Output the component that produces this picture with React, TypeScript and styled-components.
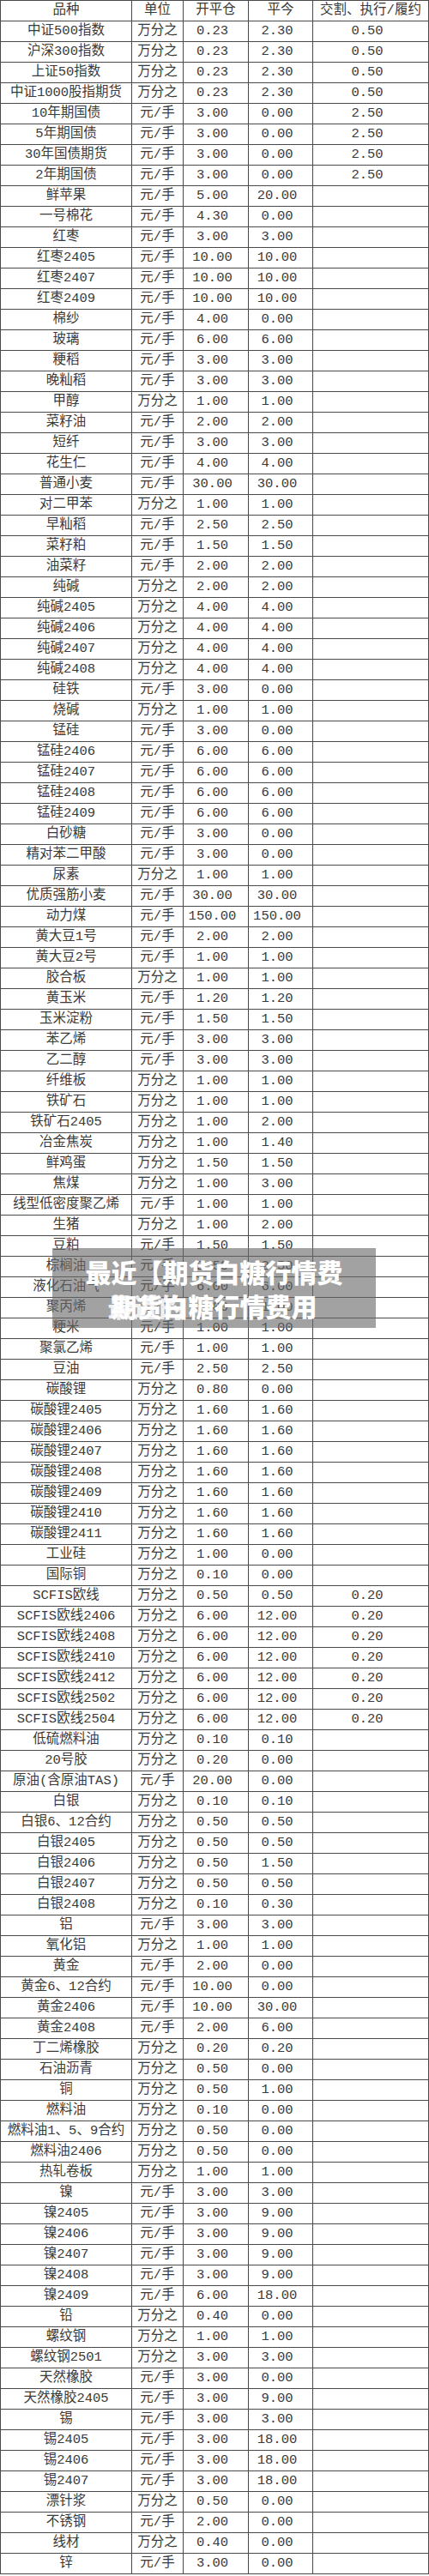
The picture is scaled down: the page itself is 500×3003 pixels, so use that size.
import styled, { createGlobalStyle } from "styled-components";

const GlobalStyle = createGlobalStyle`
  html, body {
    margin: 0;
    padding: 0;
    background: #fff;
  }
`;

type Fee = [string, string, string, string, string?];

const W = "万分之";
const Y = "元/手";

const fees: Fee[] = [
  ["中证500指数", W, "0.23", "2.30", "0.50"],
  ["沪深300指数", W, "0.23", "2.30", "0.50"],
  ["上证50指数", W, "0.23", "2.30", "0.50"],
  ["中证1000股指期货", W, "0.23", "2.30", "0.50"],
  ["10年期国债", Y, "3.00", "0.00", "2.50"],
  ["5年期国债", Y, "3.00", "0.00", "2.50"],
  ["30年国债期货", Y, "3.00", "0.00", "2.50"],
  ["2年期国债", Y, "3.00", "0.00", "2.50"],
  ["鲜苹果", Y, "5.00", "20.00"],
  ["一号棉花", Y, "4.30", "0.00"],
  ["红枣", Y, "3.00", "3.00"],
  ["红枣2405", Y, "10.00", "10.00"],
  ["红枣2407", Y, "10.00", "10.00"],
  ["红枣2409", Y, "10.00", "10.00"],
  ["棉纱", Y, "4.00", "0.00"],
  ["玻璃", Y, "6.00", "6.00"],
  ["粳稻", Y, "3.00", "3.00"],
  ["晚籼稻", Y, "3.00", "3.00"],
  ["甲醇", W, "1.00", "1.00"],
  ["菜籽油", Y, "2.00", "2.00"],
  ["短纤", Y, "3.00", "3.00"],
  ["花生仁", Y, "4.00", "4.00"],
  ["普通小麦", Y, "30.00", "30.00"],
  ["对二甲苯", W, "1.00", "1.00"],
  ["早籼稻", Y, "2.50", "2.50"],
  ["菜籽粕", Y, "1.50", "1.50"],
  ["油菜籽", Y, "2.00", "2.00"],
  ["纯碱", W, "2.00", "2.00"],
  ["纯碱2405", W, "4.00", "4.00"],
  ["纯碱2406", W, "4.00", "4.00"],
  ["纯碱2407", W, "4.00", "4.00"],
  ["纯碱2408", W, "4.00", "4.00"],
  ["硅铁", Y, "3.00", "0.00"],
  ["烧碱", W, "1.00", "1.00"],
  ["锰硅", Y, "3.00", "0.00"],
  ["锰硅2406", Y, "6.00", "6.00"],
  ["锰硅2407", Y, "6.00", "6.00"],
  ["锰硅2408", Y, "6.00", "6.00"],
  ["锰硅2409", Y, "6.00", "6.00"],
  ["白砂糖", Y, "3.00", "0.00"],
  ["精对苯二甲酸", Y, "3.00", "0.00"],
  ["尿素", W, "1.00", "1.00"],
  ["优质强筋小麦", Y, "30.00", "30.00"],
  ["动力煤", Y, "150.00", "150.00"],
  ["黄大豆1号", Y, "2.00", "2.00"],
  ["黄大豆2号", Y, "1.00", "1.00"],
  ["胶合板", W, "1.00", "1.00"],
  ["黄玉米", Y, "1.20", "1.20"],
  ["玉米淀粉", Y, "1.50", "1.50"],
  ["苯乙烯", Y, "3.00", "3.00"],
  ["乙二醇", Y, "3.00", "3.00"],
  ["纤维板", W, "1.00", "1.00"],
  ["铁矿石", W, "1.00", "1.00"],
  ["铁矿石2405", W, "1.00", "2.00"],
  ["冶金焦炭", W, "1.00", "1.40"],
  ["鲜鸡蛋", W, "1.50", "1.50"],
  ["焦煤", W, "1.00", "3.00"],
  ["线型低密度聚乙烯", Y, "1.00", "1.00"],
  ["生猪", W, "1.00", "2.00"],
  ["豆粕", Y, "1.50", "1.50"],
  ["棕榈油", Y, "2.50", "2.50"],
  ["液化石油气", Y, "6.00", "6.00"],
  ["聚丙烯", Y, "1.00", "1.00"],
  ["粳米", Y, "1.00", "1.00"],
  ["聚氯乙烯", Y, "1.00", "1.00"],
  ["豆油", Y, "2.50", "2.50"],
  ["碳酸锂", W, "0.80", "0.00"],
  ["碳酸锂2405", W, "1.60", "1.60"],
  ["碳酸锂2406", W, "1.60", "1.60"],
  ["碳酸锂2407", W, "1.60", "1.60"],
  ["碳酸锂2408", W, "1.60", "1.60"],
  ["碳酸锂2409", W, "1.60", "1.60"],
  ["碳酸锂2410", W, "1.60", "1.60"],
  ["碳酸锂2411", W, "1.60", "1.60"],
  ["工业硅", W, "1.00", "0.00"],
  ["国际铜", W, "0.10", "0.00"],
  ["SCFIS欧线", W, "0.50", "0.50", "0.20"],
  ["SCFIS欧线2406", W, "6.00", "12.00", "0.20"],
  ["SCFIS欧线2408", W, "6.00", "12.00", "0.20"],
  ["SCFIS欧线2410", W, "6.00", "12.00", "0.20"],
  ["SCFIS欧线2412", W, "6.00", "12.00", "0.20"],
  ["SCFIS欧线2502", W, "6.00", "12.00", "0.20"],
  ["SCFIS欧线2504", W, "6.00", "12.00", "0.20"],
  ["低硫燃料油", W, "0.10", "0.10"],
  ["20号胶", W, "0.20", "0.00"],
  ["原油(含原油TAS)", Y, "20.00", "0.00"],
  ["白银", W, "0.10", "0.10"],
  ["白银6、12合约", W, "0.50", "0.50"],
  ["白银2405", W, "0.50", "0.50"],
  ["白银2406", W, "0.50", "1.50"],
  ["白银2407", W, "0.50", "0.50"],
  ["白银2408", W, "0.10", "0.30"],
  ["铝", Y, "3.00", "3.00"],
  ["氧化铝", W, "1.00", "1.00"],
  ["黄金", Y, "2.00", "0.00"],
  ["黄金6、12合约", Y, "10.00", "0.00"],
  ["黄金2406", Y, "10.00", "30.00"],
  ["黄金2408", Y, "2.00", "6.00"],
  ["丁二烯橡胶", W, "0.20", "0.20"],
  ["石油沥青", W, "0.50", "0.00"],
  ["铜", W, "0.50", "1.00"],
  ["燃料油", W, "0.10", "0.00"],
  ["燃料油1、5、9合约", W, "0.50", "0.00"],
  ["燃料油2406", W, "0.50", "0.00"],
  ["热轧卷板", W, "1.00", "1.00"],
  ["镍", Y, "3.00", "3.00"],
  ["镍2405", Y, "3.00", "9.00"],
  ["镍2406", Y, "3.00", "9.00"],
  ["镍2407", Y, "3.00", "9.00"],
  ["镍2408", Y, "3.00", "9.00"],
  ["镍2409", Y, "6.00", "18.00"],
  ["铅", W, "0.40", "0.00"],
  ["螺纹钢", W, "1.00", "1.00"],
  ["螺纹钢2501", W, "3.00", "3.00"],
  ["天然橡胶", Y, "3.00", "0.00"],
  ["天然橡胶2405", Y, "3.00", "9.00"],
  ["锡", Y, "3.00", "3.00"],
  ["锡2405", Y, "3.00", "18.00"],
  ["锡2406", Y, "3.00", "18.00"],
  ["锡2407", Y, "3.00", "18.00"],
  ["漂针浆", W, "0.50", "0.00"],
  ["不锈钢", Y, "2.00", "0.00"],
  ["线材", W, "0.40", "0.00"],
  ["锌", Y, "3.00", "0.00"],
];

const Page = styled.div`
  position: relative;
  width: 500px;
`;

const Sheet = styled.div`
  width: 500px;
  box-sizing: border-box;
  border-left: 1px solid #4a4a4a;
  border-top: 1px solid #4a4a4a;
  font-family: "Liberation Mono", "Noto Sans CJK SC", monospace;
  font-size: 15.5px;
  color: #3a3a3a;
`;

const Row = styled.div`
  display: grid;
  grid-template-columns: 153px 60px 76px 75px 135px;
  height: 24px;
`;

const Cell = styled.div<{ $num?: boolean }>`
  box-sizing: border-box;
  height: 24px;
  border-right: 1px solid #4a4a4a;
  border-bottom: 1px solid #4a4a4a;
  line-height: 23px;
  text-align: center;
  white-space: nowrap;
  overflow: hidden;
  padding-right: ${(p) => (p.$num ? "8px" : "0")};
`;

const Banner = styled.div`
  position: absolute;
  left: 61px;
  top: 1455px;
  width: 377px;
  height: 93px;
  background: rgba(105, 105, 105, 0.62);
  display: flex;
  flex-direction: column;
  align-items: center;
  justify-content: center;
  gap: 2px;
  font-family: "Noto Sans CJK SC", sans-serif;
  font-weight: 900;
  font-size: 30px;
  line-height: 38px;
  color: #fff;
`;

const BannerLine = styled.div`
  position: relative;
  white-space: nowrap;
`;

const Ghost = styled.span`
  position: absolute;
  left: -4px;
  top: 0;
  opacity: 0.85;
`;

export default function App() {
  return (
    <Page>
      <GlobalStyle />
      <Sheet>
        <Row>
          <Cell>品种</Cell>
          <Cell>单位</Cell>
          <Cell>开平仓</Cell>
          <Cell>平今</Cell>
          <Cell>交割、执行/履约</Cell>
        </Row>
        {fees.map(([name, unit, open, today, deliver], i) => (
          <Row key={i}>
            <Cell>{name}</Cell>
            <Cell>{unit}</Cell>
            <Cell $num>{open}</Cell>
            <Cell $num>{today}</Cell>
            <Cell $num>{deliver ?? ""}</Cell>
          </Row>
        ))}
      </Sheet>
      <Banner>
        <BannerLine>最近【期货白糖行情费</BannerLine>
        <BannerLine>
          期货白糖行情费用
          <Ghost>最近的</Ghost>
        </BannerLine>
      </Banner>
    </Page>
  );
}
